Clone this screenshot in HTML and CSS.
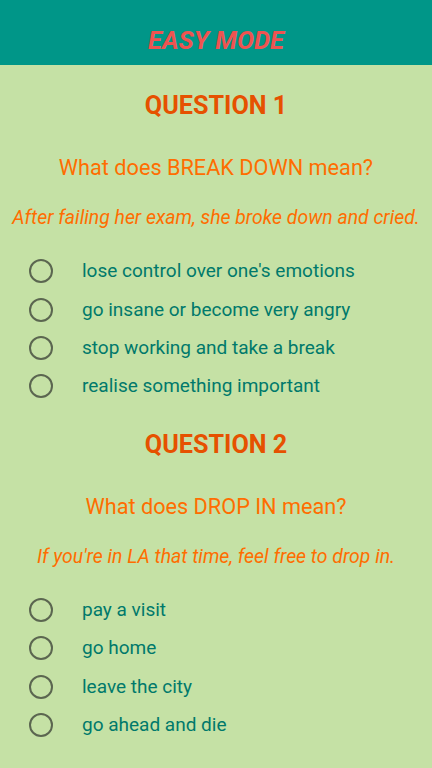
FILE: index.html
```html
<!DOCTYPE html>
<html>
<head>
<meta charset="utf-8">
<link rel="stylesheet" href="styles.css">
</head>
<body>
<header class="appbar"><h1 class="appbar-title">EASY MODE</h1></header>
<main class="content">
  <section class="question">
    <h2 class="q-title">QUESTION 1</h2>
    <p class="q-text">What does BREAK DOWN mean?</p>
    <p class="q-example">After failing her exam, she broke down and cried.</p>
    <ul class="options">
      <li class="option"><span class="radio"></span><span class="opt-label">lose control over one's emotions</span></li>
      <li class="option"><span class="radio"></span><span class="opt-label">go insane or become very angry</span></li>
      <li class="option"><span class="radio"></span><span class="opt-label">stop working and take a break</span></li>
      <li class="option"><span class="radio"></span><span class="opt-label">realise something important</span></li>
    </ul>
  </section>
  <section class="question">
    <h2 class="q-title">QUESTION 2</h2>
    <p class="q-text">What does DROP IN mean?</p>
    <p class="q-example">If you're in LA that time, feel free to drop in.</p>
    <ul class="options">
      <li class="option"><span class="radio"></span><span class="opt-label">pay a visit</span></li>
      <li class="option"><span class="radio"></span><span class="opt-label">go home</span></li>
      <li class="option"><span class="radio"></span><span class="opt-label">leave the city</span></li>
      <li class="option"><span class="radio"></span><span class="opt-label">go ahead and die</span></li>
    </ul>
  </section>
</main>
</body>
</html>
```
FILE: styles.css
```css
* { box-sizing: border-box; }
html, body {
  margin: 0;
  padding: 0;
  height: 100%;
}
body {
  background: #c5e1a5;
  font-family: Roboto, "Noto Sans", sans-serif;
  overflow: hidden;
}
.appbar {
  height: 65px;
  background: #009688;
  display: flex;
  align-items: center;
  justify-content: center;
  padding-top: 15px;
}
.appbar-title {
  margin: 0;
  font-size: 25.5px;
  font-weight: 700;
  font-style: italic;
  color: #ef5350;
  line-height: 32px;
}
.content {
  display: flex;
  flex-direction: column;
  gap: 23px;
  padding-top: 25px;
}
.question {
  display: flex;
  flex-direction: column;
  align-items: center;
}
.q-title {
  margin: 0;
  font-size: 25.2px;
  font-weight: 700;
  line-height: 32px;
  color: #e65100;
}
.q-text {
  margin: 32px 0 0;
  font-size: 21.7px;
  line-height: 28px;
  color: #ff6d00;
}
.q-example {
  margin: 24px 0 0;
  font-size: 19.4px;
  font-style: italic;
  line-height: 24px;
  color: #ff6d00;
}
.options {
  list-style: none;
  margin: 22px 0 0;
  padding: 0;
  align-self: stretch;
  display: flex;
  flex-direction: column;
}
.option {
  height: 38.4px;
  display: flex;
  align-items: center;
  padding-left: 29px;
}
.radio {
  width: 24px;
  height: 24px;
  border: 2px solid #5b6650;
  border-radius: 50%;
  flex: none;
}
.opt-label {
  margin-left: 29px;
  font-size: 19px;
  color: #00796b;
  line-height: 24px;
}
```
